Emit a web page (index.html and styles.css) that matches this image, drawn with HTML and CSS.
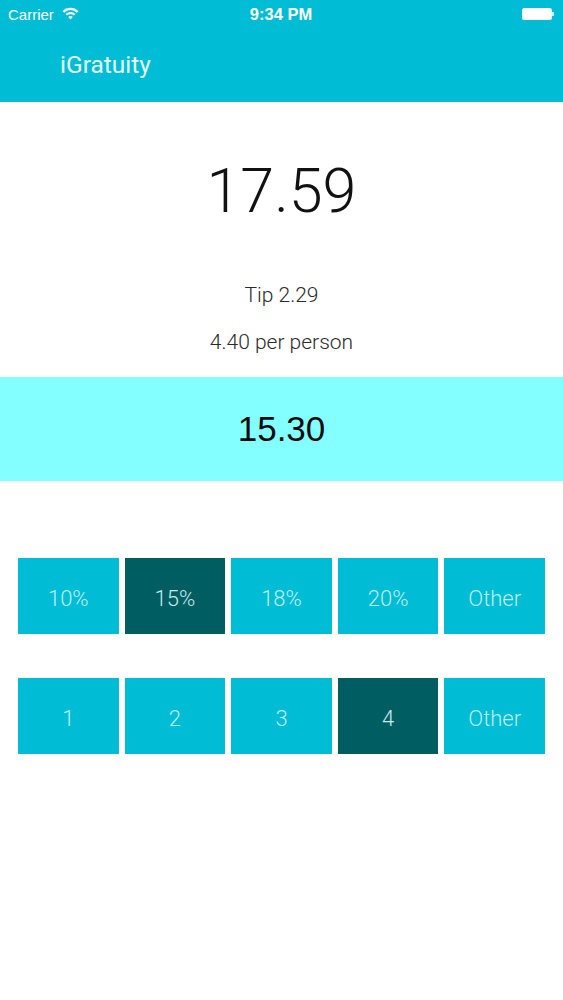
FILE: index.html
```html
<!DOCTYPE html>
<html lang="en">
<head>
<meta charset="utf-8">
<title>iGratuity</title>
<link rel="stylesheet" href="styles.css">
</head>
<body>
<header class="appbar">
  <div class="status">
    <div class="status-left">
      <span class="carrier">Carrier</span>
      <svg class="wifi" width="17" height="13" viewBox="0 0 17 13">
        <path d="M1.4 4.9 A10 10 0 0 1 15.6 4.9" fill="none" stroke="#fff" stroke-width="2.2"/>
        <path d="M4.3 7.8 A6 6 0 0 1 12.7 7.8" fill="none" stroke="#fff" stroke-width="2.2"/>
        <path d="M8.5 12.4 L6.2 10.1 A3.2 3.2 0 0 1 10.8 10.1 Z" fill="#fff"/>
      </svg>
    </div>
    <span class="time">9:34 PM</span>
    <div class="status-right">
      <span class="battery"></span><span class="nub"></span>
    </div>
  </div>
  <div class="nav">
    <h1 class="title">iGratuity</h1>
  </div>
</header>

<main>
  <section class="summary">
    <div class="total">17.59</div>
    <div class="line tip">Tip 2.29</div>
    <div class="line per">4.40 per person</div>
  </section>

  <section class="bill">
    <div class="amount">15.30</div>
  </section>

  <section class="choices">
    <div class="row">
      <button class="opt">10%</button>
      <button class="opt active">15%</button>
      <button class="opt">18%</button>
      <button class="opt">20%</button>
      <button class="opt">Other</button>
    </div>
    <div class="row">
      <button class="opt">1</button>
      <button class="opt">2</button>
      <button class="opt">3</button>
      <button class="opt active">4</button>
      <button class="opt">Other</button>
    </div>
  </section>
</main>
</body>
</html>
```

FILE: styles.css
```css
* { box-sizing: border-box; }

html, body {
  margin: 0;
  padding: 0;
  background: #ffffff;
}

body {
  width: 563px;
  min-height: 1000px;
  font-family: Roboto, "Noto Sans", sans-serif;
}

.appbar {
  background: #00bcd4;
  height: 102px;
  display: flex;
  flex-direction: column;
}

.status {
  height: 28px;
  display: flex;
  align-items: center;
  justify-content: space-between;
  padding: 0 9px 0 8px;
  color: #ffffff;
  font-family: "Liberation Sans", Arial, sans-serif;
  position: relative;
}

.status-left {
  display: flex;
  align-items: center;
  gap: 8px;
  width: 120px;
}

.carrier {
  font-size: 15px;
}

.wifi {
  margin-top: -2px;
}

.time {
  font-size: 16.5px;
  font-weight: bold;
}

.status-right {
  width: 120px;
  display: flex;
  justify-content: flex-end;
  align-items: center;
}

.battery {
  display: block;
  width: 30px;
  height: 12px;
  background: #ffffff;
  border-radius: 2.5px;
  margin-top: 0;
}

.nub {
  display: block;
  width: 2px;
  height: 4px;
  background: rgba(255, 255, 255, 0.8);
  border-radius: 0 1px 1px 0;
}

.nav {
  flex: 1;
  display: flex;
  align-items: center;
  padding-left: 60px;
}

.title {
  margin: 0;
  font-size: 24.5px;
  font-weight: 400;
  color: #e6f9fb;
  line-height: 1.172;
}

.summary {
  padding-top: 53px;
  text-align: center;
  color: #1a1a1a;
}

.total {
  font-size: 61px;
  font-weight: 300;
  line-height: 72px;
  color: #111111;
}

.line {
  font-size: 21px;
  font-weight: 300;
  line-height: 24px;
  color: #2a2a2a;
}

.tip { margin-top: 55.5px; }
.per { margin-top: 23.5px; }

.bill {
  margin-top: 23px;
  height: 104px;
  background: #84ffff;
  display: flex;
  align-items: center;
  justify-content: center;
}

.amount {
  font-family: "Liberation Sans", Arial, sans-serif;
  font-size: 35px;
  line-height: 104px;
  color: #0a0a0a;
}

.choices {
  padding: 77px 18px 0;
  display: flex;
  flex-direction: column;
  gap: 44px;
}

.row {
  display: grid;
  grid-template-columns: repeat(5, 1fr);
  gap: 6px;
}

.opt {
  height: 76px;
  border: 0;
  margin: 0;
  padding: 4px 0 0;
  background: #00bcd4;
  color: #bdeff5;
  font-family: Roboto, "Noto Sans", sans-serif;
  font-size: 22px;
  font-weight: 300;
  display: flex;
  align-items: center;
  justify-content: center;
}

.opt.active {
  background: #005e62;
  color: #c4e9ec;
}
```
